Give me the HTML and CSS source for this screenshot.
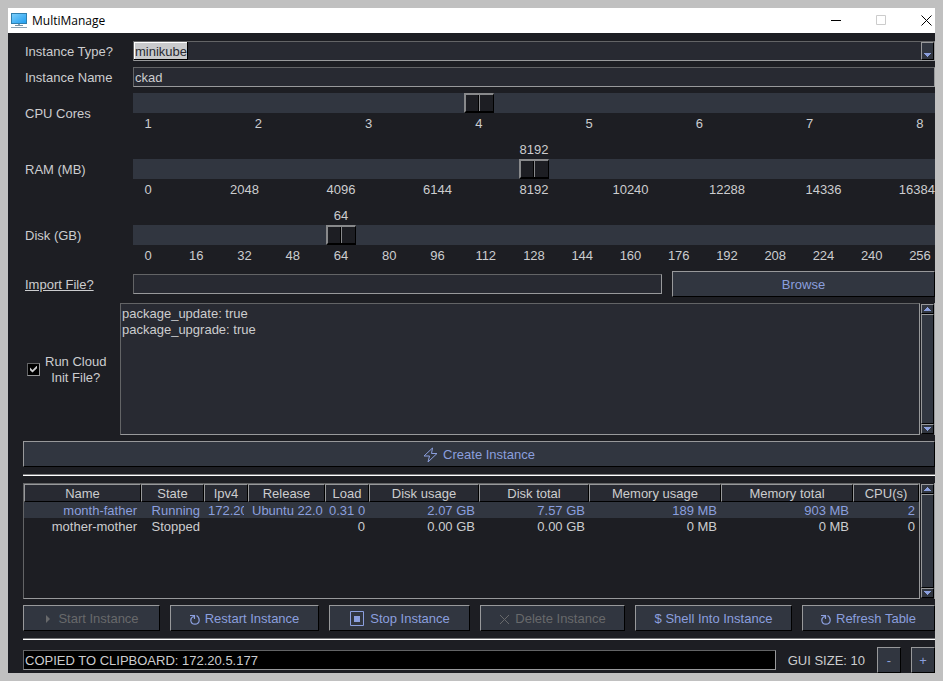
FILE: index.html
```html
<!DOCTYPE html>
<html lang="en">
<head>
<meta charset="utf-8">
<title>MultiManage</title>
<link rel="stylesheet" href="styles.css">
</head>
<body>
<div class="window">
  <header class="titlebar">
    <svg class="app-icon" width="17" height="16" viewBox="0 0 17 16" aria-hidden="true">
      <defs><linearGradient id="screen" x1="0" y1="0" x2="1" y2="1"><stop offset="0" stop-color="#7fd0fb"/><stop offset="1" stop-color="#1f9df0"/></linearGradient></defs>
      <rect x="0.5" y="0.5" width="15" height="10" fill="url(#screen)" stroke="#2f7fae"/>
      <path d="M7 11h2v1H7z" fill="#8fa3b0"/><path d="M4 12h8v1H4z" fill="#7391a5"/><path d="M0 14h16v1H0z" fill="#8ba3b3"/>
    </svg>
    <h1 class="title">MultiManage</h1>
    <div class="window-controls">
      <button class="window-control" aria-label="Minimize"><svg width="11" height="11" viewBox="0 0 11 11"><path d="M0 5.5h10" stroke="#000"/></svg></button>
      <button class="window-control" aria-label="Maximize" disabled><svg width="11" height="11" viewBox="0 0 11 11"><path d="M.5.5h9v9h-9z" fill="none" stroke="#ccc"/></svg></button>
      <button class="window-control" aria-label="Close"><svg width="11" height="11" viewBox="0 0 11 11"><path d="M.5.5l10 10M10.500.5l-10 10" stroke="#000" fill="none"/></svg></button>
    </div>
  </header>

  <main class="content">
    <div class="field">
      <label class="label" for="type">Instance Type?</label>
      <div class="combo">
        <select id="type" class="combo-select"><option>minikube</option></select>
        <span class="combo-arrow"><svg width="7" height="4" viewBox="0 0 7 4" shape-rendering="crispEdges"><path d="M0 0h7L3.500 4z"/></svg></span>
      </div>
    </div>
    <div class="field">
      <label class="label" for="name">Instance Name</label>
      <input id="name" class="text-input" type="text" value="ckad">
    </div>
    <div class="field">
      <label class="label" for="cpu">CPU Cores</label>
      <div class="slider">
        <input id="cpu" class="range" type="range" min="1" max="8" value="4">
        <div class="ticks"><span>1</span><span>2</span><span>3</span><span>4</span><span>5</span><span>6</span><span>7</span><span>8</span></div>
      </div>
    </div>
    <div class="field">
      <label class="label" for="ram">RAM (MB)</label>
      <div class="slider">
        <div class="readout"><output class="value" for="ram" style="--pos: 0.5">8192</output></div>
        <input id="ram" class="range" type="range" min="0" max="16384" value="8192">
        <div class="ticks ticks-wide"><span>0</span><span>2048</span><span>4096</span><span>6144</span><span>8192</span><span>10240</span><span>12288</span><span>14336</span><span>16384</span></div>
      </div>
    </div>
    <div class="field">
      <label class="label" for="disk">Disk (GB)</label>
      <div class="slider">
        <div class="readout"><output class="value" for="disk" style="--pos: 0.25">64</output></div>
        <input id="disk" class="range" type="range" min="0" max="256" value="64">
        <div class="ticks"><span>0</span><span>16</span><span>32</span><span>48</span><span>64</span><span>80</span><span>96</span><span>112</span><span>128</span><span>144</span><span>160</span><span>176</span><span>192</span><span>208</span><span>224</span><span>240</span><span>256</span></div>
      </div>
    </div>
    <div class="field">
      <label class="label" for="import"><span class="underlined">Import File?</span></label>
      <div class="file-row">
        <input id="import" class="text-input" type="text">
        <button class="button">Browse</button>
      </div>
    </div>

    <div class="init-row">
      <label class="check"><input class="checkbox" type="checkbox" checked><span class="check-text">Run Cloud<br>Init File?</span></label>
      <textarea class="editor" aria-label="Cloud init file">package_update: true
package_upgrade: true</textarea>
      <div class="scrollbar">
        <button class="scroll-part" aria-label="Scroll file up"><svg width="7" height="4" viewBox="0 0 7 4" shape-rendering="crispEdges"><path d="M0 4h7L3.500 0z"/></svg></button>
        <div class="scroll-part scroll-thumb"></div>
        <button class="scroll-part" aria-label="Scroll file down"><svg width="7" height="4" viewBox="0 0 7 4" shape-rendering="crispEdges"><path d="M0 0h7L3.500 4z"/></svg></button>
      </div>
    </div>

    <button class="button"><svg width="15" height="16" viewBox="0 0 15 16"><path d="M9.500 1L1 9h5.500L5 15l9-8.500H8.500z" fill="none" stroke="currentColor" stroke-linejoin="round"/></svg>Create Instance</button>
    <hr class="rule">

    <div class="table-row">
      <div class="table-frame">
        <table class="table">
          <colgroup><col class="c-name"><col class="c-state"><col class="c-ip"><col class="c-release"><col class="c-load"><col class="c-disk"><col class="c-disk"><col class="c-memory"><col class="c-memory"><col class="c-cpu"></colgroup>
          <thead><tr><th>Name</th><th>State</th><th>Ipv4</th><th>Release</th><th>Load</th><th>Disk usage</th><th>Disk total</th><th>Memory usage</th><th>Memory total</th><th>CPU(s)</th></tr></thead>
          <tbody>
            <tr class="selected"><td>month-father</td><td>Running</td><td><div class="clip">172.20</div></td><td>Ubuntu 22.0</td><td>0.31 0</td><td>2.07 GB</td><td>7.57 GB</td><td>189 MB</td><td>903 MB</td><td>2</td></tr>
            <tr><td>mother-mother</td><td>Stopped</td><td></td><td></td><td>0</td><td>0.00 GB</td><td>0.00 GB</td><td>0 MB</td><td>0 MB</td><td>0</td></tr>
          </tbody>
        </table>
      </div>
      <div class="scrollbar">
        <button class="scroll-part" aria-label="Scroll table up"><svg width="7" height="4" viewBox="0 0 7 4" shape-rendering="crispEdges"><path d="M0 4h7L3.500 0z"/></svg></button>
        <div class="scroll-part scroll-thumb"></div>
        <button class="scroll-part" aria-label="Scroll table down"><svg width="7" height="4" viewBox="0 0 7 4" shape-rendering="crispEdges"><path d="M0 0h7L3.500 4z"/></svg></button>
      </div>
    </div>

    <div class="actions">
      <button class="button" disabled><svg width="9" height="9" viewBox="0 0 9 9"><path d="M2 0l4 4-4 4z" fill="currentColor"/></svg>Start Instance</button>
      <button class="button"><svg width="10" height="11" viewBox="0 0 10 11"><path d="M0 1.500h4.500V5M4 2.500C1.500 3 .7 5 .8 6.500 1 9 3 10.200 5 10.200S9.200 8.800 9.200 6.200C9.200 4 8.200 2.500 6.500 1.500" fill="none" stroke="currentColor" stroke-width="1.200"/></svg>Restart Instance</button>
      <button class="button"><svg width="16" height="16" viewBox="0 0 16 16"><path d="M1.500 .5h13v14h-13z" fill="none" stroke="currentColor"/><path d="M5 5h6v6H5z" fill="currentColor"/></svg>Stop Instance</button>
      <button class="button" disabled><svg width="11" height="11" viewBox="0 0 11 11"><path d="M1 1l9 9M10 1l-9 9" fill="none" stroke="currentColor"/></svg>Delete Instance</button>
      <button class="button">$ Shell Into Instance</button>
      <button class="button"><svg width="10" height="11" viewBox="0 0 10 11"><path d="M0 1.500h4.500V5M4 2.500C1.500 3 .7 5 .8 6.500 1 9 3 10.200 5 10.200S9.200 8.800 9.200 6.200C9.200 4 8.200 2.500 6.500 1.500" fill="none" stroke="currentColor" stroke-width="1.200"/></svg>Refresh Table</button>
    </div>
    <hr class="rule">

    <footer class="status">
      <input class="text-input console" type="text" readonly aria-label="Status" value="COPIED TO CLIPBOARD: 172.20.5.177">
      <span class="gui-size">GUI SIZE: 10</span>
      <div class="size-buttons">
        <button class="button" aria-label="Decrease GUI size">-</button>
        <button class="button" aria-label="Increase GUI size">+</button>
      </div>
    </footer>
  </main>
</div>
</body>
</html>
```
FILE: styles.css
```css
:root {
  --bg: #1d1e23;
  --field: #282a32;
  --raised: #313640;
  --text: #cccdcf;
  --accent: #8b9fde;
  --light: #98999b;
  --dim: #636466;
}

* { box-sizing: border-box; }

body {
  margin: 0;
  padding: 8px;
  min-height: 100vh;
  background: #c0c0c0;
  color: var(--text);
  font: 13px/16px "Liberation Sans", Arial, sans-serif;
}

button, input, select, textarea { font: inherit; margin: 0; border-radius: 0; }
svg { flex: none; display: block; }

.window { background: var(--bg); }

.titlebar {
  display: flex;
  align-items: center;
  height: 25px;
  padding: 0 3px;
  background: #fff;
  color: #000;
}
.title { margin: 0 auto 0 4px; font: 12px/16px "Open Sans", "Noto Sans", sans-serif; }
.window-controls { display: flex; gap: 34px; }
.window-control { padding: 0; border: 0; background: none; }

.content {
  display: flex;
  flex-direction: column;
  gap: 6px;
  padding: 8px 0 0 15px;
}

.field { display: grid; grid-template-columns: 110px minmax(0, 1fr); align-items: center; }
.label { padding: 2px 0 0 2px; }
.underlined { text-decoration: underline; }

.text-input {
  width: 100%;
  min-width: 0;
  height: 20px;
  padding: 0 1px;
  border: 1px solid;
  border-color: var(--dim) var(--light) var(--light) var(--dim);
  background: var(--field);
  color: var(--text);
  outline: 0;
}

.combo {
  position: relative;
  height: 20px;
  border: 1px solid;
  border-color: var(--dim) var(--light) var(--light) var(--dim);
  background: var(--field);
}
.combo-select {
  display: block;
  width: 100%;
  height: 18px;
  padding: 2px 1px 0;
  border: 0;
  appearance: none;
  color: #282a32;
  background:
    linear-gradient(#fff, #fff) 0 0 / 53px 1px no-repeat,
    linear-gradient(#fff, #fff) 0 0 / 1px 17px no-repeat,
    linear-gradient(#c9cacc, #c9cacc) 0 0 / 53px 17px no-repeat,
    linear-gradient(#000, #000) 0 0 / 54px 18px no-repeat;
}
.combo-arrow {
  position: absolute;
  top: 0;
  right: 0;
  display: flex;
  align-items: flex-end;
  justify-content: center;
  width: 13px;
  height: 18px;
  padding-bottom: 2px;
  border: 1px solid;
  border-color: var(--light) #000 #000 var(--light);
  background: var(--raised);
  fill: var(--accent);
  pointer-events: none;
}

.readout { position: relative; height: 20px; line-height: 22px; }
.value {
  position: absolute;
  left: calc(15px + (100% - 30px) * var(--pos));
  transform: translateX(-50%);
}
.range {
  display: block;
  width: 100%;
  height: 20px;
  appearance: none;
  background: var(--raised);
}
.range::-webkit-slider-thumb {
  appearance: none;
  width: 30px;
  height: 20px;
  border: 2px solid;
  border-color: #88898b #000 #000 #88898b;
  border-width: 2px 1px 2px 2px;
  background: linear-gradient(90deg, var(--bg) 12px, #000 12px 13px, #88898b 13px 14px, var(--bg) 14px);
}
.ticks { display: flex; justify-content: space-between; height: 20px; line-height: 22px; }
.ticks span { display: flex; justify-content: center; width: 30px; }
.ticks-wide span:last-child { justify-content: flex-end; }

.file-row {
  display: grid;
  grid-template-columns: minmax(0, 529fr) minmax(0, 263fr);
  align-items: center;
  gap: 10px;
}

.button {
  display: flex;
  align-items: center;
  justify-content: center;
  gap: 5px;
  height: 26px;
  padding: 2px 0 0;
  border: 1px solid;
  border-color: var(--light) #000 #000 var(--light);
  background: var(--raised);
  color: var(--accent);
  white-space: nowrap;
}
.button:disabled { color: #68696b; }

.init-row { display: grid; grid-template-columns: 97px minmax(0, 1fr) 15px; height: 132px; }
.check { display: flex; align-items: center; gap: 5px; padding-left: 4px; text-align: center; }
.check-text { padding-top: 2px; }
.checkbox {
  flex: none;
  width: 13px;
  height: 13px;
  appearance: none;
  border: 1px solid;
  border-color: var(--dim) var(--light) var(--light) var(--dim);
  background: #000;
}
.checkbox:checked::before {
  content: "";
  display: block;
  width: 7px;
  height: 7px;
  margin: 2px;
  background: var(--text);
  clip-path: polygon(0 30%, 36% 64%, 100% 0, 100% 38%, 36% 100%, 0 68%);
}
.editor {
  padding: 2px 1px;
  border: 1px solid;
  border-color: var(--dim) var(--light) var(--light) var(--dim);
  background: var(--field);
  color: var(--text);
  resize: none;
  outline: 0;
}

.scrollbar {
  display: flex;
  flex-direction: column;
  padding: 1px 0 1px 1px;
  border-right: 1px solid var(--light);
}
.scroll-part {
  display: flex;
  align-items: center;
  justify-content: center;
  height: 10px;
  padding: 0;
  border: 1px solid;
  border-color: var(--light) #000 #000 var(--light);
  background: var(--raised);
  fill: var(--accent);
}
.scroll-thumb { flex: 1; }

.rule { width: 100%; height: 2px; margin: 1px 0; border: 0; border-top: 1px solid #77787a; background: #fff; }

.table-row { display: grid; grid-template-columns: minmax(0, 1fr) 15px; height: 116px; }
.table-frame {
  border: 1px solid;
  border-color: var(--dim) var(--light) var(--light) var(--dim);
}
.table { width: 100%; table-layout: fixed; border-collapse: separate; border-spacing: 0; }
.table th {
  height: 18px;
  padding: 2px 0 0;
  border: 1px solid;
  border-color: var(--light) #000 #000 var(--light);
  background: var(--field);
  font-weight: normal;
  line-height: 14px;
}
.table td { height: 16px; padding: 2px 4px 0; line-height: 14px; text-align: right; white-space: nowrap; }
.clip { overflow: hidden; }
.selected { background: var(--raised); color: var(--accent); }
.c-name { width: 117px; }
.c-state { width: 63px; }
.c-ip, .c-load { width: 44px; }
.c-release { width: 77px; }
.c-disk { width: 110px; }
.c-memory { width: 132px; }
.c-cpu { width: 66px; }

.actions { display: grid; grid-template-columns: 137fr 149fr 141fr 145fr 157fr 133fr; gap: 10px; }

.status { display: flex; align-items: center; gap: 12px; }
.console { flex: 1; background: #000; }
.gui-size { padding-top: 2px; white-space: nowrap; }
.size-buttons { display: flex; gap: 10px; }
.size-buttons .button { width: 24px; }
```
